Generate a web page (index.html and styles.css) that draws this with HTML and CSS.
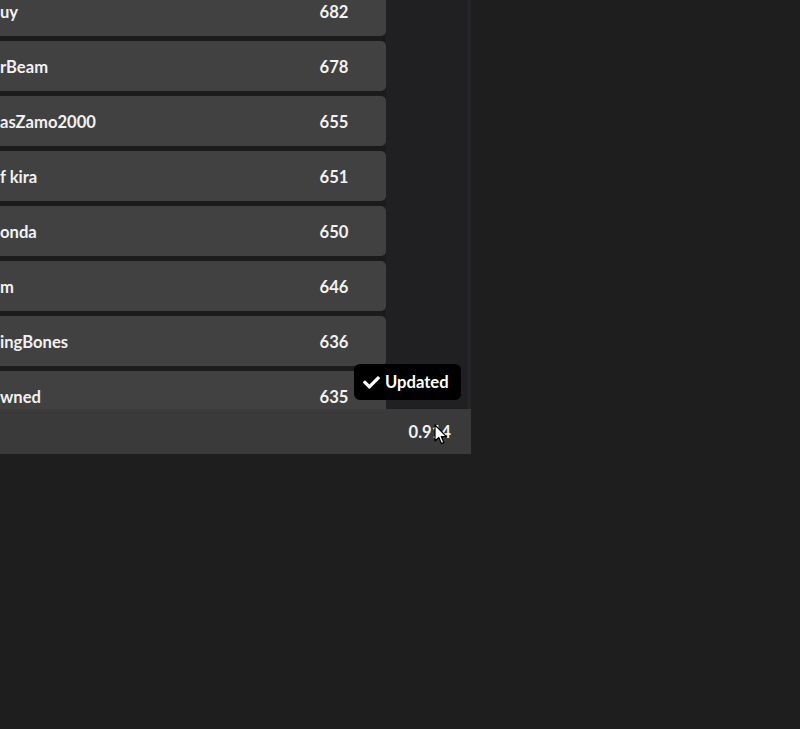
FILE: index.html
```html
<!DOCTYPE html>
<html>
<head>
<meta charset="utf-8">
<link rel="stylesheet" href="styles.css">
</head>
<body>
<div class="panel">
  <div class="list">
    <div class="row"><span class="name">uy</span><span class="score">682</span></div>
    <div class="row"><span class="name">rBeam</span><span class="score">678</span></div>
    <div class="row"><span class="name">asZamo2000</span><span class="score">655</span></div>
    <div class="row"><span class="name">f kira</span><span class="score">651</span></div>
    <div class="row"><span class="name">onda</span><span class="score">650</span></div>
    <div class="row"><span class="name">m</span><span class="score">646</span></div>
    <div class="row"><span class="name">ingBones</span><span class="score">636</span></div>
    <div class="row"><span class="name">wned</span><span class="score">635</span></div>
  </div>
  <div class="footer"><span class="version">0.914</span></div>
</div>
<div class="tooltip">
  <svg class="check" viewBox="0 0 512 512" width="17" height="17"><path fill="#fff" d="M173.9 439.4l-166.4-166.4c-10-10-10-26.2 0-36.2l36.2-36.2c10-10 26.2-10 36.2 0L192 312.7 432.1 72.6c10-10 26.2-10 36.2 0l36.2 36.2c10 10 10 26.2 0 36.2L210.1 439.4c-10 10-26.2 10-36.2 0z"/></svg>
  <span>Updated</span>
</div>
<svg class="cursor" width="14" height="22" viewBox="0 0 14 22"><path d="M1 1 L1 17 L4.8 13.4 L7.4 19.6 L9.8 18.6 L7.3 12.6 L12.4 12.6 Z" fill="#fff" stroke="#000" stroke-width="1.2" stroke-linejoin="round"/></svg>
</body>
</html>
```

FILE: styles.css
```css
html, body {
  margin: 0;
  padding: 0;
  background: #1e1e1f;
  height: 100%;
  overflow: hidden;
}
body {
  font-family: "Lato", "Noto Sans", sans-serif;
  font-weight: 700;
  font-size: 16.6px;
  color: #f2f2f2;
}
.panel {
  width: 481px;
  margin-left: -10px;
  margin-top: -14px;
  background: #202022;
}
.list {
  height: 423px;
  overflow: hidden;
  display: flex;
  flex-direction: column;
  gap: 5px;
  padding-right: 81px;
  background: linear-gradient(to right, #1b1b1c 0, #1b1b1c 396px, #202022 396px);
  border-right: 4px solid #252527;
  box-sizing: border-box;
}
.row {
  flex: 0 0 50px;
  box-sizing: border-box;
  display: flex;
  align-items: center;
  justify-content: space-between;
  background: #414141;
  border-radius: 5px;
  padding-left: 10px;
  padding-right: 20px;
  padding-top: 1px;
}
.score {
  width: 64px;
  text-align: center;
}
.footer {
  height: 45px;
  background: #3a3a3b;
  display: flex;
  align-items: center;
  justify-content: flex-end;
  padding-right: 20px;
  padding-top: 1px;
  box-sizing: border-box;
}
.tooltip {
  position: absolute;
  left: 354px;
  top: 364px;
  width: 107px;
  height: 36px;
  box-sizing: border-box;
  background: #000;
  border-radius: 6px;
  display: flex;
  align-items: center;
  gap: 5px;
  padding-left: 9px;
  color: #fff;
}
.check { display: block; }
.cursor {
  position: absolute;
  left: 434px;
  top: 424px;
}
```
